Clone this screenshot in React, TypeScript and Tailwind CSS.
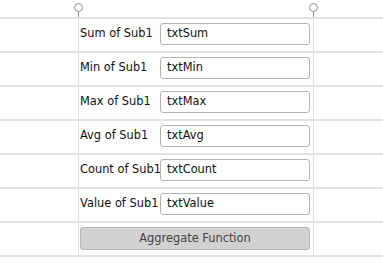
const ROWS = [
  { label: "Sum of Sub1", value: "txtSum" },
  { label: "Min of Sub1", value: "txtMin" },
  { label: "Max of Sub1", value: "txtMax" },
  { label: "Avg of Sub1", value: "txtAvg" },
  { label: "Count of Sub1", value: "txtCount" },
  { label: "Value of Sub1", value: "txtValue" },
];

function Handle() {
  return (
    <div className="flex w-[9px] flex-col items-center pt-[3px]">
      <div className="h-[9px] w-[9px] shrink-0 rounded-full border border-[#8a8a8a] bg-white" />
      <div className="w-px flex-1 bg-[#8a8a8a]" />
    </div>
  );
}

function Row({ children }: { children: React.ReactNode }) {
  return (
    <div className="flex h-[34px] border-b-2 border-[#dde4e3]">
      <div className="w-[78px]" />
      <div className="flex w-[236px] items-start border-x border-[#dde4e3] pl-[1px] pt-[4px]">
        {children}
      </div>
      <div className="flex-1" />
    </div>
  );
}

export default function App() {
  return (
    <div
      className="h-[277px] w-[383px] bg-white text-[11.4px] text-[#111]"
      style={{ fontFamily: "'DejaVu Sans', Verdana, sans-serif" }}
    >
      <div className="flex h-[19px] border-b-2 border-[#dde4e3]">
        <div className="w-[74px]" />
        <Handle />
        <div className="w-[226px]" />
        <Handle />
      </div>
      {ROWS.map((r) => (
        <Row key={r.label}>
          <span className="flex h-[22px] w-[80px] items-center leading-none whitespace-nowrap">{r.label}</span>
          <div className="flex h-[22px] w-[150px] items-center rounded-[3px] border border-[#b4b4b4] px-[6px] leading-none">
            {r.value}
          </div>
        </Row>
      ))}
      <Row>
        <button
          type="button"
          className="h-[23px] w-[230px] rounded-[3px] border border-[#b8b8b8] bg-[#d1d1d1] text-[11.4px] text-[#444]"
        >
          Aggregate Function
        </button>
      </Row>
    </div>
  );
}
